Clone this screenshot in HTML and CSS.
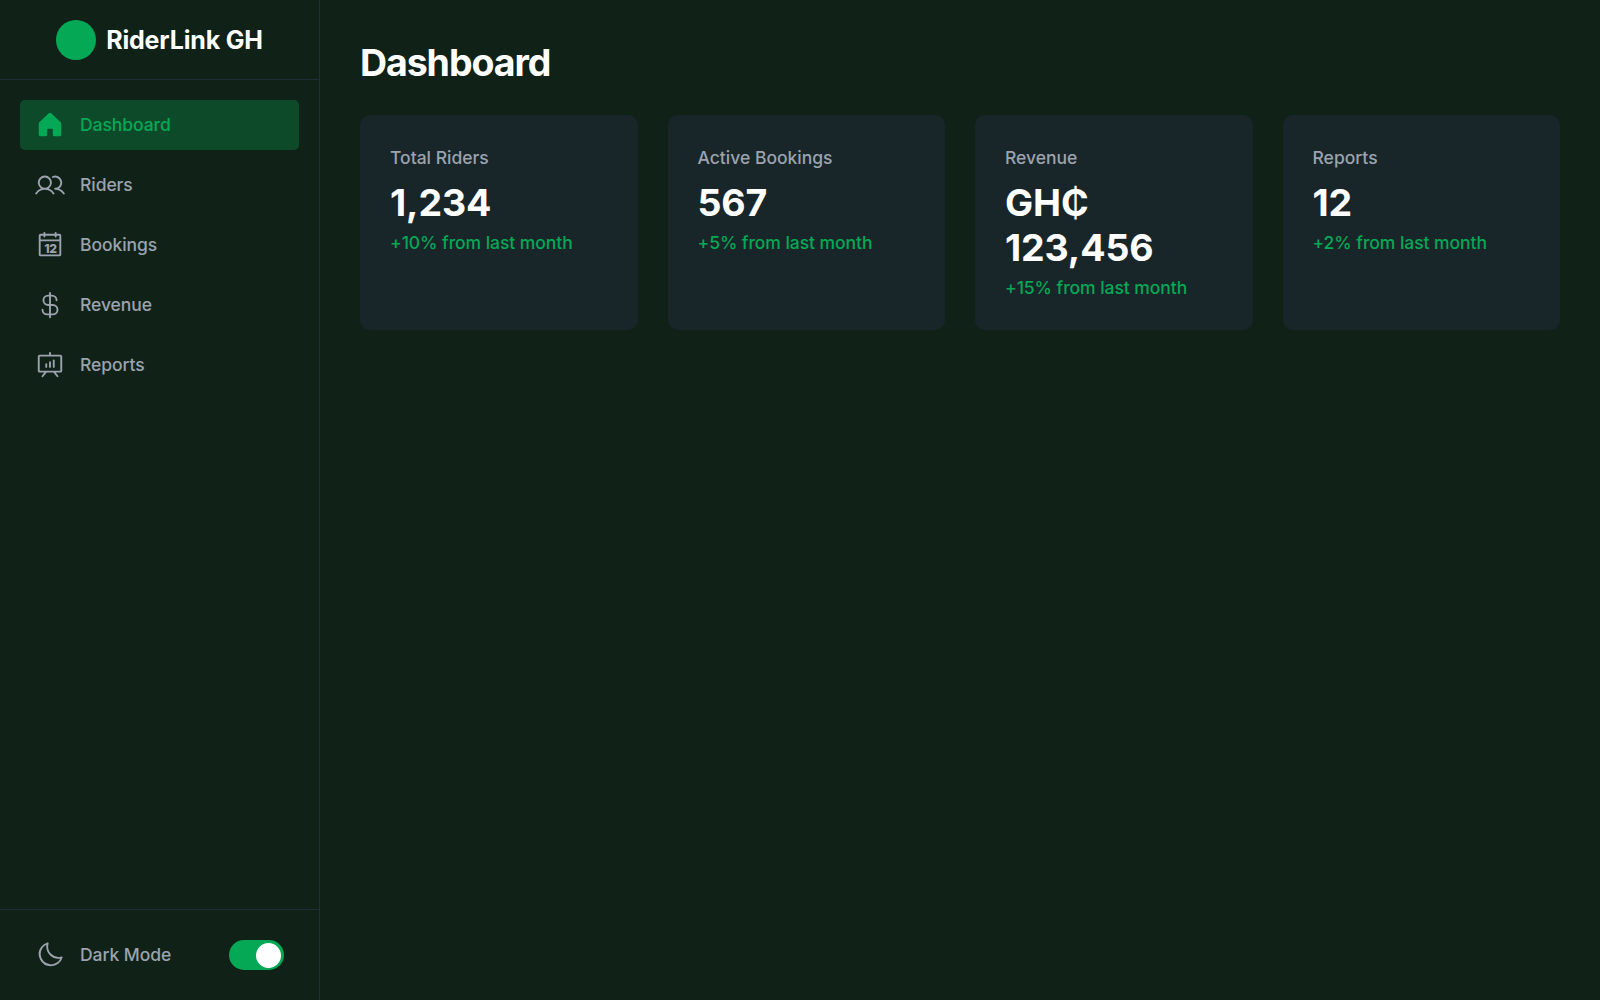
FILE: index.html
```html
<!DOCTYPE html>
<html lang="en">
<head>
<meta charset="utf-8">
<title>RiderLink GH</title>
<link rel="stylesheet" href="styles.css">
</head>
<body>
<div class="app">
  <aside class="sidebar">
    <header class="brand"><span class="brand-mark"></span><span class="brand-name">RiderLink GH</span></header>
    <nav class="nav">
      <a class="nav-item active"><svg class="icon" viewBox="0 0 256 256"><path d="M224,115.55V208a16,16,0,0,1-16,16H168a16,16,0,0,1-16-16V168a8,8,0,0,0-8-8H112a8,8,0,0,0-8,8v40a16,16,0,0,1-16,16H48a16,16,0,0,1-16-16V115.55a16,16,0,0,1,5.17-11.78l80-75.48.11-.11a16,16,0,0,1,21.53,0,1.14,1.14,0,0,0,.11.11l80,75.48A16,16,0,0,1,224,115.55Z"/></svg><span class="nav-text">Dashboard</span></a>
      <a class="nav-item"><svg class="icon" viewBox="0 0 256 256"><path d="M117.25,157.92a60,60,0,1,0-66.5,0A95.83,95.83,0,0,0,3.53,195.63a8,8,0,1,0,13.4,8.74,80,80,0,0,1,134.14,0,8,8,0,0,0,13.4-8.74A95.83,95.83,0,0,0,117.25,157.92ZM40,108a44,44,0,1,1,44,44A44.05,44.05,0,0,1,40,108Zm210.14,98.7a8,8,0,0,1-11.07-2.33A79.83,79.83,0,0,0,172,168a8,8,0,0,1,0-16,44,44,0,1,0-16.34-84.87,8,8,0,1,1-5.94-14.85,60,60,0,0,1,55.53,105.64,95.83,95.83,0,0,1,47.22,37.71A8,8,0,0,1,250.14,206.7Z"/></svg><span class="nav-text">Riders</span></a>
      <a class="nav-item"><svg class="icon" viewBox="0 0 256 256"><path d="M208,32H184V24a8,8,0,0,0-16,0v8H88V24a8,8,0,0,0-16,0v8H48A16,16,0,0,0,32,48V208a16,16,0,0,0,16,16H208a16,16,0,0,0,16-16V48A16,16,0,0,0,208,32ZM72,48v8a8,8,0,0,0,16,0V48h80v8a8,8,0,0,0,16,0V48h24V80H48V48ZM208,208H48V96H208V208Z"/><text class="icon-day" x="131" y="192" text-anchor="middle">12</text></svg><span class="nav-text">Bookings</span></a>
      <a class="nav-item"><svg class="icon" viewBox="0 0 256 256"><path d="M152,120H136V56h8a32,32,0,0,1,32,32,8,8,0,0,0,16,0,48.05,48.05,0,0,0-48-48h-8V24a8,8,0,0,0-16,0V40h-8a48,48,0,0,0,0,96h8v64H104a32,32,0,0,1-32-32,8,8,0,0,0-16,0,48.05,48.05,0,0,0,48,48h16v16a8,8,0,0,0,16,0V216h16a48,48,0,0,0,0-96Zm-40,0a32,32,0,0,1,0-64h8v64Zm40,80H136V136h16a32,32,0,0,1,0,64Z"/></svg><span class="nav-text">Revenue</span></a>
      <a class="nav-item"><svg class="icon" viewBox="0 0 256 256"><path d="M216,40H136V24a8,8,0,0,0-16,0V40H40A16,16,0,0,0,24,56V176a16,16,0,0,0,16,16H79.36L57.75,219a8,8,0,0,0,12.5,10l29.59-37h56.32l29.59,37a8,8,0,1,0,12.5-10l-21.61-27H216a16,16,0,0,0,16-16V56A16,16,0,0,0,216,40Zm0,136H40V56H216V176ZM104,120v24a8,8,0,0,1-16,0V120a8,8,0,0,1,16,0Zm32-16v40a8,8,0,0,1-16,0V104a8,8,0,0,1,16,0Zm32-16v56a8,8,0,0,1-16,0V88a8,8,0,0,1,16,0Z"/></svg><span class="nav-text">Reports</span></a>
    </nav>
    <footer class="mode">
      <div class="nav-item"><svg class="icon" viewBox="0 0 256 256"><path d="M233.54,142.23a8,8,0,0,0-8-2,88.08,88.08,0,0,1-109.8-109.8,8,8,0,0,0-10-10,104.84,104.84,0,0,0-52.91,37A104,104,0,0,0,136,224a103.09,103.09,0,0,0,62.52-20.88,104.84,104.84,0,0,0,37-52.91A8,8,0,0,0,233.54,142.23ZM188.9,190.34A88,88,0,0,1,65.66,67.11a89,89,0,0,1,31.4-26A106,106,0,0,0,96,56,104.11,104.11,0,0,0,200,160a106,106,0,0,0,14.92-1.06A89,89,0,0,1,188.9,190.34Z"/></svg><span class="nav-text">Dark Mode</span><span class="toggle"><span class="thumb"></span></span></div>
    </footer>
  </aside>
  <main class="main">
    <h1 class="title">Dashboard</h1>
    <section class="cards">
      <article class="card"><p class="label">Total Riders</p><p class="value">1,234</p><p class="change">+10% from last month</p></article>
      <article class="card"><p class="label">Active Bookings</p><p class="value">567</p><p class="change">+5% from last month</p></article>
      <article class="card"><p class="label">Revenue</p><p class="value">GH₵ 123,456</p><p class="change">+15% from last month</p></article>
      <article class="card"><p class="label">Reports</p><p class="value">12</p><p class="change">+2% from last month</p></article>
    </section>
  </main>
</div>
</body>
</html>
```
FILE: styles.css
```css
* { box-sizing: border-box; margin: 0; padding: 0; }
body { background: #102218; color: #fff; font-family: Inter, "Liberation Sans", sans-serif; font-size: 17.5px; line-height: 25px; }
.app { display: flex; height: 100vh; overflow: hidden; }
.sidebar { display: flex; flex-direction: column; width: 320px; flex-shrink: 0; border-right: 1px solid #1f2f37; }
.brand { display: flex; align-items: center; justify-content: center; gap: 10px; height: 80px; border-bottom: 1px solid #1f2f37; }
.brand-mark { width: 40px; height: 40px; border-radius: 50%; background: #05a855; }
.brand-name { padding-top: 1px; font-size: 25px; line-height: 35px; font-weight: 700; letter-spacing: -0.17px; }
.nav { display: flex; flex: 1; flex-direction: column; gap: 10px; padding: 20px; }
.nav-item { display: flex; align-items: center; gap: 15px; height: 50px; padding: 0 15px; border-radius: 5px; color: #9ca3af; font-weight: 500; }
.nav-item.active { background: #0c4a2a; color: #05a855; }
.nav-text { padding-bottom: 1px; letter-spacing: -0.06px; }
.icon { width: 30px; height: 30px; fill: currentColor; }
.icon-day { font-size: 104px; font-weight: 800; letter-spacing: -4px; }
.mode { padding: 20px; border-top: 1px solid #1f2f37; }
.toggle { display: flex; justify-content: flex-end; width: 55px; height: 30px; margin-left: auto; padding: 2.5px; border-radius: 15px; background: #05a855; }
.thumb { width: 25px; height: 25px; margin-right: 0.5px; border-radius: 50%; background: #fff; }
.main { flex: 1; padding: 40px; }
.title { margin-bottom: 30px; font-size: 37.5px; line-height: 45px; font-weight: 700; letter-spacing: -1.08px; }
.cards { display: grid; grid-template-columns: repeat(4, 1fr); gap: 30px; }
.card { padding: 30px; border-radius: 10px; background: #18262a; }
.label { color: #9ca3af; font-weight: 500; }
.value { margin-top: 10px; font-size: 37.5px; line-height: 45px; font-weight: 700; letter-spacing: -0.12px; }
.change { margin-top: 5px; color: #05a855; font-weight: 500; letter-spacing: -0.05px; }
```
